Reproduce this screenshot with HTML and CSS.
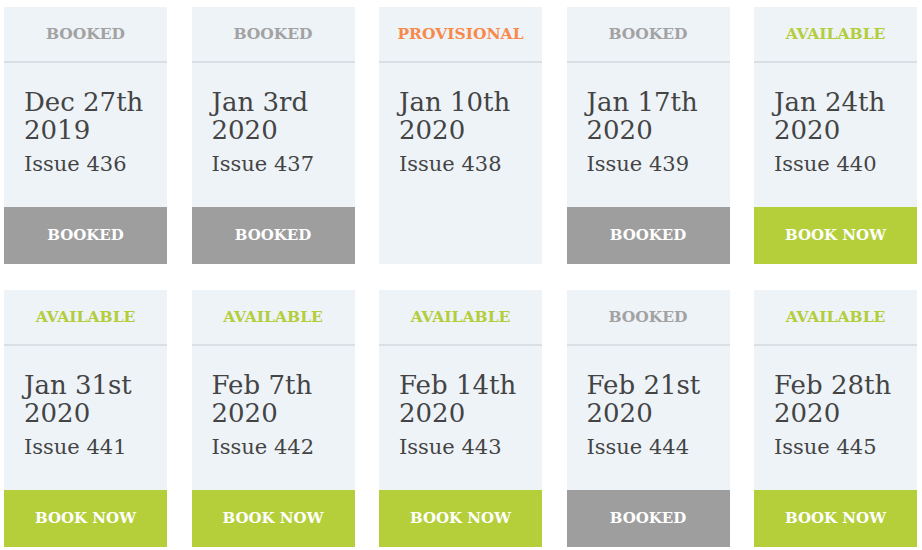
FILE: index.html
```html
<!DOCTYPE html>
<html lang="en">
<head>
    <meta charset="UTF-8">
    <meta name="viewport" content="width=device-width, initial-scale=1.0">
    <title>Issue Bookings</title>
    <link rel="stylesheet" href="styles.css">
</head>
<body>
    <div class="issues">
        <div class="issue">
            <div class="status booked">BOOKED</div>
            <div class="details">
                <p class="date">Dec 27th<br>2019</p>
                <p class="number">Issue 436</p>
            </div>
            <div class="action booked">BOOKED</div>
        </div>
        <div class="issue">
            <div class="status booked">BOOKED</div>
            <div class="details">
                <p class="date">Jan 3rd<br>2020</p>
                <p class="number">Issue 437</p>
            </div>
            <div class="action booked">BOOKED</div>
        </div>
        <div class="issue">
            <div class="status provisional">PROVISIONAL</div>
            <div class="details">
                <p class="date">Jan 10th<br>2020</p>
                <p class="number">Issue 438</p>
            </div>
            <div class="action empty"></div>
        </div>
        <div class="issue">
            <div class="status booked">BOOKED</div>
            <div class="details">
                <p class="date">Jan 17th<br>2020</p>
                <p class="number">Issue 439</p>
            </div>
            <div class="action booked">BOOKED</div>
        </div>
        <div class="issue">
            <div class="status available">AVAILABLE</div>
            <div class="details">
                <p class="date">Jan 24th<br>2020</p>
                <p class="number">Issue 440</p>
            </div>
            <div class="action available">BOOK NOW</div>
        </div>

        <div class="issue">
            <div class="status available">AVAILABLE</div>
            <div class="details">
                <p class="date">Jan 31st<br>2020</p>
                <p class="number">Issue 441</p>
            </div>
            <div class="action available">BOOK NOW</div>
        </div>
        <div class="issue">
            <div class="status available">AVAILABLE</div>
            <div class="details">
                <p class="date">Feb 7th<br>2020</p>
                <p class="number">Issue 442</p>
            </div>
            <div class="action available">BOOK NOW</div>
        </div>
        <div class="issue">
            <div class="status available">AVAILABLE</div>
            <div class="details">
                <p class="date">Feb 14th<br>2020</p>
                <p class="number">Issue 443</p>
            </div>
            <div class="action available">BOOK NOW</div>
        </div>
        <div class="issue">
            <div class="status booked">BOOKED</div>
            <div class="details">
                <p class="date">Feb 21st<br>2020</p>
                <p class="number">Issue 444</p>
            </div>
            <div class="action booked">BOOKED</div>
        </div>
        <div class="issue">
            <div class="status available">AVAILABLE</div>
            <div class="details">
                <p class="date">Feb 28th<br>2020</p>
                <p class="number">Issue 445</p>
            </div>
            <div class="action available">BOOK NOW</div>
        </div>
    </div>
</body>
</html>
```

FILE: styles.css
```css
body {
    font-family: "DejaVu Serif", "Liberation Serif", serif;
    margin: 0;
    padding: 0;
    background-color: #fff;
    color: #444;
}

.issues {
    display: grid;
    grid-template-columns: repeat(5, 163px);
    column-gap: 24.5px;
    row-gap: 26px;
    padding: 7px 0 0 4px;
}

.issue {
    display: flex;
    flex-direction: column;
    height: 257px;
    background-color: #eef3f8;
}

.status {
    height: 54px;
    line-height: 54px;
    border-bottom: 2px solid #d9dfe5;
    text-align: center;
    font-size: 15.5px;
    font-weight: bold;
}

.status.booked {
    color: #a2a2a2;
}

.status.available {
    color: #b3cd3b;
}

.status.provisional {
    color: #f7894a;
}

.details {
    flex: 1;
    padding: 25px 20px 0;
}

.date {
    margin: 0;
    font-size: 26px;
    line-height: 28px;
}

.number {
    margin: 6px 0 0;
    font-size: 21px;
    line-height: 28px;
}

.action {
    height: 57px;
    line-height: 57px;
    text-align: center;
    color: #fff;
    font-size: 15px;
    font-weight: bold;
}

.action.booked {
    background-color: #9e9e9e;
}

.action.available {
    background-color: #b5cf3a;
}
```
